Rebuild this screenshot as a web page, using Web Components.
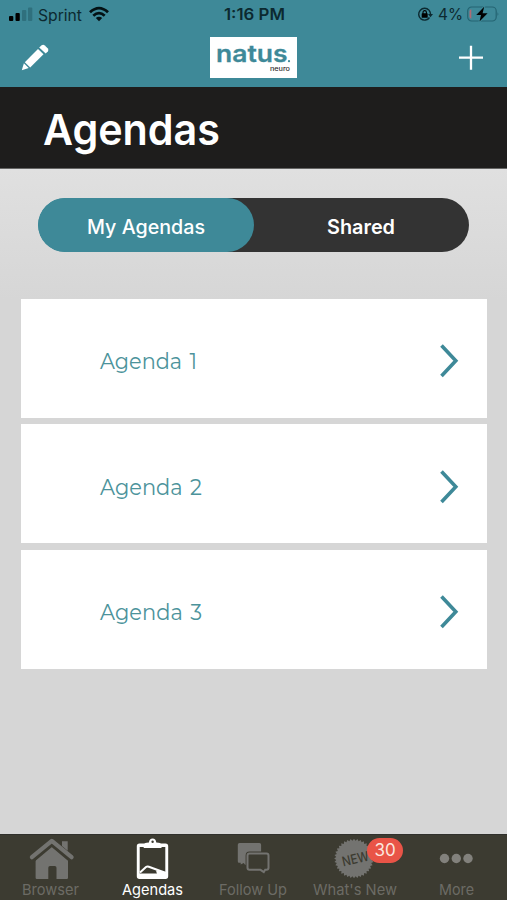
<!DOCTYPE html>
<html lang="en">
<head>
<meta charset="utf-8">
<title>Agendas</title>
<style>
body { margin: 0; font-family: Inter, "Liberation Sans", sans-serif; --teal: #3e8998; }
</style>
</head>
<body>
<agenda-app></agenda-app>
<script>
function define(name, html, setup) {
  customElements.define(name, class extends HTMLElement {
    connectedCallback() {
      if (this.shadowRoot) return;
      const root = this.attachShadow({ mode: 'open' });
      root.innerHTML = html;
      if (setup) setup(this, root);
    }
  });
}

/* Single line of text spread over a given width */
define('fit-text', `<style>
:host { display: block; line-height: 0; }
svg { display: block; overflow: visible; }
</style><svg><text fill="currentColor" lengthAdjust="spacingAndGlyphs"></text></svg>`, (el, root) => {
  const svg = root.querySelector('svg'), t = root.querySelector('text');
  const w = el.getAttribute('w'), s = +el.getAttribute('size');
  svg.setAttribute('width', w);
  svg.setAttribute('height', s);
  t.setAttribute('y', s * 0.86);
  t.setAttribute('font-size', s);
  t.setAttribute('textLength', w);
  t.textContent = el.getAttribute('text');
});

define('status-bar', `<style>
:host { display: flex; height: 29px; box-sizing: border-box; padding: 6px 8px 0 9px; color: #0c2930; }
.side { flex: 1; display: flex; align-items: flex-start; }
.right { justify-content: flex-end; }
fit-text { font-weight: 400; margin-top: .5px; }
.time { font-weight: 600; }
.sprint { margin-right: 7px; margin-left: 5px; }
</style>
<div class="side">
<svg width="24" height="17" viewBox="0 0 24 17"><rect y="10" width="4.3" height="5" rx="1"/><rect x="6.5" y="7" width="4.3" height="8" rx="1"/><g fill="#2f707d"><rect x="13" y="4" width="4.3" height="11" rx="1"/><rect x="19" y="1.5" width="4.3" height="13.5" rx="1"/></g></svg>
<fit-text class="sprint" text="Sprint" w="44" size="16"></fit-text>
<svg width="20" height="17" viewBox="0 0 20 17"><g fill="none" stroke="#031114" stroke-width="2.8"><path d="M1 6.3Q10-2.1 19 6.3"/><path d="M4.3 9.7Q10 4.6 15.7 9.7"/></g><path d="M6.8 12Q10 9.3 13.2 12L10 15.2Z" fill="#031114"/></svg>
</div>
<fit-text class="time" text="1:16 PM" w="61" size="15.5"></fit-text>
<div class="side right">
<svg width="17" height="17" viewBox="0 0 17 17"><path d="M13 4.3A5.9 5.9 0 1 0 13.5 11.5" fill="none" stroke="#0c2930" stroke-width="1.4"/><path d="M13 4.3A5.9 5.9 0 0 1 14.5 8" fill="none" stroke="#0c2930" stroke-width="1.4"/><path d="M12 8h5l-2.5 3.3Z" fill="#0c2930"/><rect x="5.7" y="7.3" width="6" height="4.5" rx=".6"/><path d="M7 8V6.3a1.7 1.7 0 0 1 3.4 0V8" fill="none" stroke="#000" stroke-width="1.1"/></svg>
<fit-text style="margin-left:5px;margin-right:4px" text="4%" w="25" size="15.5"></fit-text>
<svg width="32" height="17" viewBox="0 0 32 17"><rect x=".7" y="1" width="28.5" height="14" rx="4" fill="none" stroke="#246472" stroke-width="1.2"/><path d="M4.3 3.2v9.6q-1.8-.5-1.8-2.3V5.5q0-1.8 1.8-2.3Z" fill="#ad6b74"/><path d="M30.5 6.2q1.7 1.8 0 3.6Z" fill="#246472"/><path d="M17.2.8 9.2 8.9h4.8l-1.5 6.7 8.1-8.4h-5Z" stroke="#3e8998" stroke-width="1.8" paint-order="stroke"/></svg>
</div>`);

define('natus-logo', `<style>
:host { display: block; width: 87px; height: 41px; background: #fff; }
svg { display: block; }
</style>
<svg width="87" height="41" viewBox="0 0 87 41"><text x="6" y="25.2" font-size="24" font-weight="600" fill="#3e8998" stroke="#3e8998" stroke-width=".3" textLength="71.5" lengthAdjust="spacingAndGlyphs">natus</text><circle cx="79" cy="24.2" r="1.1" fill="#3e8998"/><text x="60" y="34.2" font-size="6.4" font-weight="500" fill="#302c2c" textLength="20" lengthAdjust="spacingAndGlyphs">neuro</text></svg>`);

define('nav-header', `<style>
:host { display: block; height: 87px; background: var(--teal); }
.row { display: flex; justify-content: space-between; align-items: flex-start; padding: 8px 23px 0 21px; }
svg { display: block; }
</style>
<status-bar></status-bar>
<div class="row">
<svg width="30" height="30" viewBox="0 0 30 30" style="margin-top:5px"><g fill="#fff"><path d="m.8 28.2 2.1-7 4.8 4.8Z"/><path d="M3.8 20.2 17 6.9l5.5 5.3L9.2 25.4Z"/><path d="m18.2 5.6 2.4-2.3q1.7-1.2 3.2.2l3.1 3.1q1 1.5-.1 3l-2.1 2Z"/></g></svg>
<natus-logo style="margin-left:8px"></natus-logo>
<svg width="26" height="26" viewBox="0 0 26 26" style="margin-top:8px;margin-left:10px"><path d="M1 12.7h24M13 .7v24" stroke="#fff" stroke-width="2.3"/></svg>
</div>`);

define('page-title', `<style>
:host { display: block; height: 82px; box-sizing: border-box; padding: 20.5px 43px 0; background: #1e1d1c; color: #fff; font-weight: 600; border-bottom: 1px solid #656564; }
</style><fit-text text="Agendas" w="177" size="43"></fit-text>`);

define('segment-switch', `<style>
:host { display: flex; height: 54px; border-radius: 27px; background: linear-gradient(90deg, var(--teal) 40px, #333 40px); overflow: hidden; color: #fff; font-weight: 500; }
div { flex: 1; display: flex; justify-content: center; box-sizing: border-box; padding-top: 19.5px; border-radius: 27px; }
.on { background: var(--teal); }
.off { font-weight: 600; }
</style>
<div class="on"><fit-text text="My Agendas" w="118" size="19.5"></fit-text></div>
<div class="off"><fit-text text="Shared" w="68" size="19.5"></fit-text></div>`);

define('agenda-card', `<style>
:host { display: flex; justify-content: space-between; align-items: center; height: 119px; background: #fff; box-sizing: border-box; padding: 6px 27px 0 79px; color: #4c939b; }
svg { display: block; }
</style>
<svg width="21" height="36" viewBox="0 0 21 36"><path d="m2.5 2.5 14.3 15.3L2.5 33.1" fill="none" stroke="#3e8998" stroke-width="3.6"/></svg>`, (el, root) => {
  const t = document.createElement('fit-text');
  t.setAttribute('text', el.getAttribute('label'));
  t.setAttribute('w', el.getAttribute('w'));
  t.setAttribute('size', 22);
  t.style.fontFamily = 'Montserrat, Inter, sans-serif';
  t.style.wordSpacing = '2px';
  root.insertBefore(t, root.querySelector('svg'));
});

define('tab-item', `<style>
:host { display: flex; flex-direction: column; align-items: center; color: #6c6b65; position: relative; }
:host([active]) { color: #fff; }
::slotted(svg) { display: block; width: 48px; height: 44px; margin-top: 3px; }
</style><slot></slot>`, (el, root) => {
  const t = document.createElement('fit-text');
  t.setAttribute('text', el.getAttribute('label'));
  t.setAttribute('w', el.getAttribute('w'));
  t.setAttribute('size', 15);
  root.append(t);
  if (el.hasAttribute('badge')) {
    const b = document.createElement('count-badge');
    b.textContent = el.getAttribute('badge');
    root.append(b);
  }
});

define('count-badge', `<style>
:host { position: absolute; left: 63px; top: 3px; width: 36px; height: 25px; border-radius: 13px; background: #e95447; color: #fbe6df; font-size: 17px; line-height: 25px; text-align: center; }
</style><slot></slot>`);

define('tab-bar', `<style>
:host { display: grid; grid-template-columns: repeat(5, 1fr); height: 66px; box-sizing: border-box; background: #3c3b31; border-top: 1px solid #30302c; }
</style>
<tab-item label="Browser" w="57"><svg viewBox="0 0 48 44"><path d="M24.8 8.5 41 21v18.8q0 1.2-1.2 1.2H29.5V29.7q0-1.7-1.7-1.7H23q-1.7 0-1.7 1.7V41H9.8q-1.2 0-1.2-1.2V21Z" fill="#737370"/><path d="M4.5 21.5 24.8 4.5 45 21.5" fill="none" stroke="#3c3b31" stroke-width="7"/><path d="M35 3.2h5.7v9.5L35 8Z" fill="#737370"/><path d="M4.9 19.2 24.8 2.9 44.6 19.2" fill="none" stroke="#737370" stroke-width="4.2" stroke-linecap="round" stroke-linejoin="round"/></svg></tab-item>
<tab-item label="Agendas" w="61" active><svg viewBox="0 0 48 44"><path fill-rule="evenodd" d="M11.5 5.5h26q2.7 0 2.7 2.7v30.1q0 2.7-2.7 2.7h-26q-2.7 0-2.7-2.7V8.2q0-2.7 2.7-2.7ZM11.7 9v26.5h25.6V9Z" fill="#fff"/><path d="m12 34.6 6-5.5q1.2-1 2.8-.4L38 35" fill="none" stroke="#fff" stroke-width="2"/><path d="M17 34.6 20 32l8 2.6Z" fill="#3c3b31"/><path d="M28 32.5 37.4 34v2H29Z" fill="#fff"/><path d="M15.7 10V7.7q0-2.5 3-2.9l2.2-.3Q21.4.4 24.6.4t3.7 4.1l2.2.3q3 .4 3 2.9V10Z" fill="#fff"/><circle cx="24.6" cy="3.8" r="1.2" fill="#3c3b31"/></svg></tab-item>
<tab-item label="Follow Up" w="68"><svg viewBox="0 0 48 44"><path d="M10.5 5.1h20q1.6 0 1.6 1.6v16.6q0 1.5-1.5 1.5H18l-1.6 2.4-1.7-2.1-3 1.5v-1.8H10q-1.2 0-1.2-1.5V6.7q0-1.6 1.7-1.6Z" fill="#737370"/><path d="M20.5 15.5h17q2 0 2 2v12.3q0 2-2 2h-1.3l-1.4 3-3.3-3h-11q-2 0-2-2V17.5q0-2 2-2Z" fill="#3c3b31" stroke="#3c3b31" stroke-width="3.8"/><path d="M20.5 15.5h17q2 0 2 2v12.3q0 2-2 2h-1.3l-1.4 2.2-3.3-2.2h-11q-2 0-2-2V17.5q0-2 2-2Z" fill="#3c3b31" stroke="#737370" stroke-width="2"/></svg></tab-item>
<tab-item label="What's New" w="84" badge="30"><svg viewBox="0 0 48 44"><polygon fill="#737370"/><text x="24.5" y="25.6" transform="rotate(-13 24 21)" text-anchor="middle" font-size="13.5" font-weight="500" fill="#3c3b31" textLength="27" lengthAdjust="spacingAndGlyphs">NEW</text></svg></tab-item>
<tab-item label="More" w="35"><svg viewBox="0 0 48 44"><g fill="#82817c"><circle cx="12.5" cy="20.5" r="4.7"/><circle cx="24.3" cy="20.5" r="4.7"/><circle cx="36" cy="20.5" r="4.7"/></g></svg></tab-item>`, (el, root) => {
  /* Starburst seal with 36 teeth */
  const pts = [];
  for (let i = 0; i < 72; i++) {
    const r = i % 2 ? 17.8 : 19.8, a = i * Math.PI / 36;
    pts.push((23 + r * Math.cos(a)).toFixed(2) + ',' + (20.5 + r * Math.sin(a)).toFixed(2));
  }
  root.querySelector('polygon').setAttribute('points', pts.join(' '));
});

define('agenda-app', `<style>
:host { display: flex; flex-direction: column; width: 507px; height: 900px; overflow: hidden; }
main { flex: 1; background: linear-gradient(#e0e0e0, #d6d6d6 130px); padding: 28.5px 20px 0 21px; }
segment-switch { margin: 0 18px 0 17px; }
.list { display: grid; gap: 6.5px; margin-top: 47px; }
</style>
<nav-header></nav-header>
<page-title></page-title>
<main>
<segment-switch></segment-switch>
<div class="list">
<agenda-card label="Agenda 1" w="97"></agenda-card>
<agenda-card label="Agenda 2" w="102"></agenda-card>
<agenda-card label="Agenda 3" w="102"></agenda-card>
</div>
</main>
<tab-bar></tab-bar>`);
</script>
</body>
</html>
